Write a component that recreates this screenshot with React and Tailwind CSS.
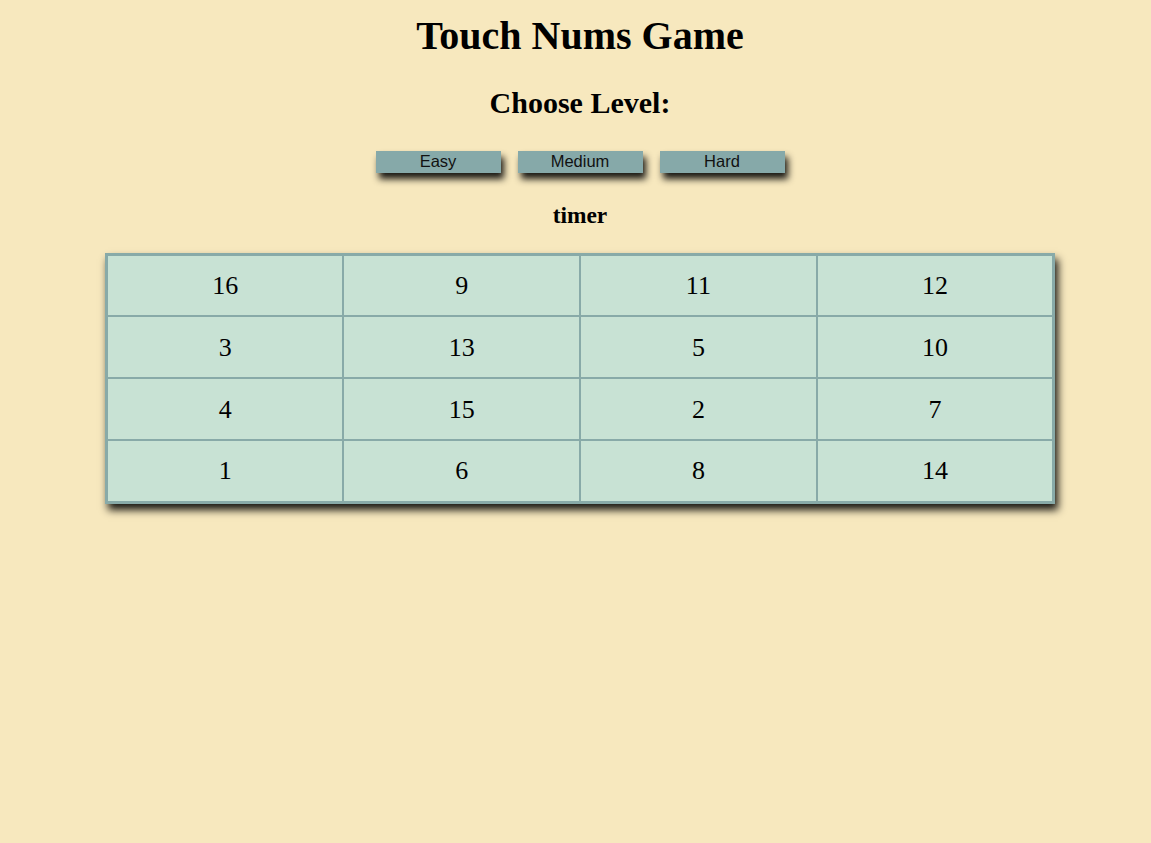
import React from "react";

const rows = [
  [16, 9, 11, 12],
  [3, 13, 5, 10],
  [4, 15, 2, 7],
  [1, 6, 8, 14],
];

export default function App() {
  return (
    <div
      className="min-h-[843px] w-full bg-[#f7e8be] pl-[9px] text-black"
      style={{ fontFamily: '"Liberation Serif", "Times New Roman", serif' }}
    >
      <div className="flex flex-col items-center">
        <h1 className="mt-[13px] text-[40px] leading-[46px] font-bold">Touch Nums Game</h1>
        <h2 className="mt-[27px] text-[30px] leading-[34.5px] font-bold">Choose Level:</h2>
        <div className="mt-[30px] flex gap-[17px]">
          {["Easy", "Medium", "Hard"].map((l) => (
            <button
              key={l}
              className="h-[22px] w-[125px] bg-[#86a9a9] pb-[2px] text-[16.5px] leading-[20px] text-[#111] shadow-[3px_6px_7px_rgba(0,0,0,0.9)]"
              style={{ fontFamily: '"Liberation Sans", Arial, sans-serif' }}
            >
              {l}
            </button>
          ))}
        </div>
        <h3 className="mt-[29px] text-[23.4px] leading-[27px] font-bold">timer</h3>
        <table className="mt-[24px] w-[950px] border-collapse border-[3px] border-[#88aaa8] bg-[#c8e2d4] shadow-[3px_6px_8px_rgba(0,0,0,0.9)]">
          <tbody>
            {rows.map((r, i) => (
              <tr key={i}>
                {r.map((n) => (
                  <td
                    key={n}
                    className="h-[62px] w-1/4 border-2 border-[#88aaa8] text-center text-[26px]"
                  >
                    {n}
                  </td>
                ))}
              </tr>
            ))}
          </tbody>
        </table>
      </div>
    </div>
  );
}
